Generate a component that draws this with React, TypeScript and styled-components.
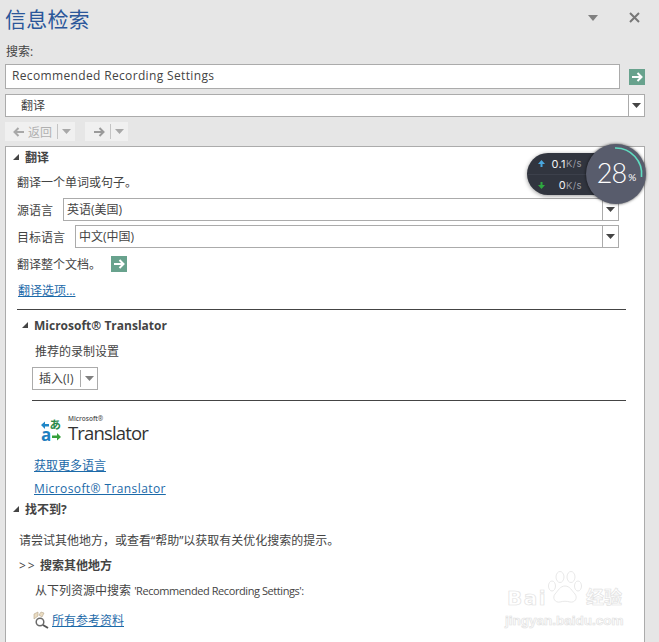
import styled, { createGlobalStyle } from 'styled-components';

const GlobalStyle = createGlobalStyle`
  html, body {
    margin: 0;
    height: 100%;
    background: #e6e6e6;
    overflow: hidden;
  }
  body {
    font-family: "Open Sans", "Noto Sans CJK SC", sans-serif;
    font-size: 12px;
    color: #444;
  }
`;

const Pane = styled.div`
  width: 659px;
  height: 642px;
  padding: 0 14px 0 5px;
  box-sizing: border-box;
  display: flex;
  flex-direction: column;
  position: relative;
  overflow: hidden;
`;

const TitleBar = styled.div`
  height: 44px;
  display: flex;
  align-items: flex-start;
  justify-content: space-between;
`;

const Title = styled.h1`
  margin: 5px 0 0;
  font-size: 21px;
  line-height: 28px;
  font-weight: 400;
  color: #2b579a;
  letter-spacing: 0.2px;
`;

const WindowButtons = styled.div`
  display: flex;
  gap: 31px;
  padding: 12px 5px 0 0;
  align-items: flex-start;
`;

const SearchLabel = styled.div`
  height: 20px;
  line-height: 16px;
  padding-left: 1px;
`;

const SearchRow = styled.div`
  display: flex;
  align-items: center;
  justify-content: space-between;
  height: 25px;
`;

const SearchInput = styled.div`
  width: 615px;
  height: 25px;
  box-sizing: border-box;
  border: 1px solid #ababab;
  background: #fff;
  padding-left: 6px;
  line-height: 21px;
  font-size: 12px;
  letter-spacing: 0.35px;
  color: #444;
`;

const GoButton = styled.span`
  width: 16px;
  height: 16px;
  background: #68a28d;
  display: inline-flex;
  align-items: center;
  justify-content: center;
  flex: none;
`;

const Combo = styled.div<{ $width?: string }>`
  display: flex;
  flex: ${(p) => (p.$width ? 'none' : '1')};
  width: ${(p) => p.$width ?? 'auto'};
  height: 23px;
  box-sizing: border-box;
  border: 1px solid #ababab;
  background: #fff;
`;

const ComboText = styled.div<{ $indent?: number }>`
  flex: 1;
  padding-left: ${(p) => p.$indent ?? 3}px;
  line-height: 21px;
`;

const ComboArrow = styled.div`
  width: 15px;
  border-left: 1px solid #ababab;
  display: flex;
  align-items: center;
  justify-content: center;
`;

const SourceRow = styled.div`
  margin-top: 5px;
  display: flex;
`;

const Nav = styled.div`
  margin-top: 5px;
  height: 20px;
  display: flex;
  gap: 10px;
`;

const NavGroup = styled.div`
  display: flex;
  align-items: center;
  background: #f0f0f0;
  height: 19px;
  color: #b0b0b0;
`;

const NavPart = styled.div<{ $first?: boolean }>`
  display: flex;
  align-items: center;
  gap: 3px;
  height: 15px;
  padding: ${(p) => (p.$first ? '0 5px 0 8px' : '0 4px')};
  border-left: ${(p) => (p.$first ? 'none' : '1px solid #c4c4c4')};
`;

const Results = styled.div`
  margin-top: 4px;
  flex: 1;
  background: #fff;
  border: 1px solid #ababab;
  border-bottom: none;
  padding: 0 18px 0 0;
  position: relative;
`;

const Collapse = styled.div<{ $indent: number; $top: number }>`
  display: flex;
  align-items: center;
  gap: 6px;
  padding-left: ${(p) => p.$indent}px;
  margin-top: ${(p) => p.$top}px;
  height: 20px;
  font-weight: 700;
  color: #444;
`;

const Corner = styled.span`
  width: 0;
  height: 0;
  border-style: solid;
  border-width: 0 0 6px 6px;
  border-color: transparent transparent #444 transparent;
  flex: none;
`;

const Line = styled.div<{ $indent: number; $top: number; $height?: number }>`
  padding-left: ${(p) => p.$indent}px;
  margin-top: ${(p) => p.$top}px;
  height: ${(p) => p.$height ?? 18}px;
  line-height: ${(p) => p.$height ?? 18}px;
`;

const LangRow = styled.div<{ $top: number }>`
  display: flex;
  align-items: center;
  justify-content: space-between;
  padding: 0 7px 0 11px;
  margin-top: ${(p) => p.$top}px;
`;

const Link = styled.a<{ $spaced?: boolean }>`
  color: #1c6aa9;
  text-decoration: underline;
  letter-spacing: ${(p) => (p.$spaced ? '0.4px' : '0')};
`;

const DocRow = styled.div`
  display: flex;
  align-items: center;
  gap: 10px;
  padding-left: 11px;
  margin-top: 6px;
  height: 20px;
`;

const Rule = styled.hr<{ $top: number; $left: number }>`
  border: none;
  height: 1px;
  background: #444;
  margin: ${(p) => p.$top}px 0 0 ${(p) => p.$left}px;
`;

const Bold = styled.span`
  font-weight: 700;
`;

const Chevrons = styled.span`
  display: inline-block;
  width: 21px;
  letter-spacing: 2px;
`;

const SmallLatin = styled.span`
  font-size: 11px;
  letter-spacing: -0.42px;
`;

const InsertButton = styled.div`
  margin: 6px 0 0 26px;
  width: 66px;
  height: 23px;
  box-sizing: border-box;
  border: 1px solid #ababab;
  display: flex;
  align-items: center;
`;

const InsertText = styled.div`
  width: 48px;
  height: 17px;
  line-height: 17px;
  padding-left: 6px;
  box-sizing: border-box;
  border-right: 1px solid #ababab;
`;

const InsertArrow = styled.div`
  flex: 1;
  display: flex;
  justify-content: center;
`;

const Logo = styled.div`
  margin: 14px 0 0 35px;
  display: flex;
  align-items: flex-end;
  gap: 7px;
  height: 27px;
`;

const LogoMark = styled.svg`
  overflow: visible;
`;

const LogoWords = styled.div`
  display: flex;
  flex-direction: column;
  color: #333;
`;

const LogoMaker = styled.span`
  font-size: 6.5px;
  line-height: 8px;
  font-family: "Open Sans", sans-serif;
  font-weight: 600;
  color: #555;
`;

const LogoName = styled.span`
  font-size: 18.500px;
  line-height: 19px;
  letter-spacing: -0.85px;
  font-family: "Open Sans", sans-serif;
`;

const RefRow = styled.div`
  display: flex;
  align-items: center;
  gap: 2px;
  padding-left: 27px;
  margin-top: 10px;
  height: 20px;
`;

const Meter = styled.div`
  position: absolute;
  left: 527px;
  top: 144px;
  width: 120px;
  height: 60px;
`;

const MeterPill = styled.div`
  position: absolute;
  left: 0;
  top: 9px;
  width: 90px;
  height: 42px;
  border-radius: 21px;
  background: #31353f;
  box-shadow: 0 1px 4px rgba(0, 0, 0, 0.4);
  font-family: "Inter", sans-serif;
`;

const MeterRow = styled.div`
  height: 21px;
  box-sizing: border-box;
  display: flex;
  align-items: center;
  justify-content: flex-end;
  padding-right: 35px;
  position: relative;
  font-size: 11px;
  letter-spacing: 0.4px;
  color: #f2f2f2;
  & + & {
    border-top: 1px solid #3c404b;
  }
`;

const MeterUnit = styled.span`
  font-size: 9.500px;
  color: #9a9da6;
`;

const MeterIcon = styled.svg`
  position: absolute;
  left: 10px;
  top: 6px;
`;

const MeterDial = styled.div`
  position: absolute;
  left: 59px;
  top: 0;
  width: 60px;
  height: 60px;
  padding-bottom: 3px;
  box-sizing: border-box;
  border-radius: 50%;
  background: #585c6c;
  box-shadow: 0 0 3px rgba(0, 0, 0, 0.7);
  display: flex;
  align-items: center;
  justify-content: center;
  color: #fff;
  font-family: "Lato", sans-serif;
  font-size: 27px;
  font-weight: 300;
  letter-spacing: -1px;
`;

const DialPercent = styled.span`
  font-size: 10px;
  font-weight: 400;
  margin: 9px 0 0 2px;
`;

const DialRing = styled.svg`
  position: absolute;
  left: 0;
  top: 0;
`;

const Watermark = styled.div`
  position: absolute;
  left: 505px;
  top: 571px;
  width: 122px;
  color: #fff;
  -webkit-text-stroke: 0.7px #e2e2e2;
  font-family: "Liberation Sans", "Noto Sans CJK SC", sans-serif;
`;

const MarkTop = styled.div`
  display: flex;
  align-items: flex-end;
  height: 36px;
  font-weight: 700;
  line-height: 18px;
`;

const MarkBai = styled.span`
  width: 42px;
  padding-left: 2px;
  box-sizing: border-box;
  font-family: "DejaVu Sans", sans-serif;
  font-size: 20px;
  letter-spacing: 1.5px;
`;

const MarkCn = styled.span`
  font-size: 18px;
  margin-left: 3px;
`;

const MarkUrl = styled.div`
  font-size: 13.500px;
  font-weight: 700;
  line-height: 14px;
  margin-top: 7px;
`;

const LogoGlyph = styled.text<{ $fill: string; $size: number }>`
  fill: ${(p) => p.$fill};
  font-size: ${(p) => p.$size}px;
  font-weight: 700;
  font-family: "Open Sans", "Noto Sans CJK JP", sans-serif;
`;

const Tri = ({ color = '#444' }: { color?: string }) => (
  <svg width="9" height="5" viewBox="0 0 9 5">
    <path d="M0 0h9L4.500 5z" fill={color} />
  </svg>
);

const Arrow = ({ color = '#fff', size = 12 }: { color?: string; size?: number }) => (
  <svg width={size} height={size} viewBox="0 0 12 12" fill="none" stroke={color} strokeWidth="2">
    <path d="M1 6h9M6.500 2l4 4-4 4" />
  </svg>
);

const BackArrow = () => (
  <svg width="12" height="12" viewBox="0 0 12 12" fill="none" stroke="#a8a8a8" strokeWidth="2">
    <path d="M11 6H2M5.500 2l-4 4 4 4" />
  </svg>
);

export default function App() {
  return (
    <Pane>
      <GlobalStyle />
      <TitleBar>
        <Title>信息检索</Title>
        <WindowButtons>
          <svg width="10" height="6" viewBox="0 0 10 6" style={{ marginTop: 3 }}>
            <path d="M0 0h10L5 6z" fill="#808080" />
          </svg>
          <svg width="11" height="11" viewBox="0 0 11 11" stroke="#777" strokeWidth="2">
            <path d="M1 1l9 9M10 1l-9 9" />
          </svg>
        </WindowButtons>
      </TitleBar>
      <SearchLabel>搜索:</SearchLabel>
      <SearchRow>
        <SearchInput>Recommended Recording Settings</SearchInput>
        <GoButton>
          <Arrow />
        </GoButton>
      </SearchRow>
      <SourceRow>
        <Combo>
          <ComboText $indent={15}>翻译</ComboText>
          <ComboArrow>
            <Tri />
          </ComboArrow>
        </Combo>
      </SourceRow>
      <Nav>
        <NavGroup>
          <NavPart $first>
            <BackArrow />
            返回
          </NavPart>
          <NavPart>
            <Tri color="#a8a8a8" />
          </NavPart>
        </NavGroup>
        <NavGroup>
          <NavPart $first>
            <Arrow color="#9a9a9a" />
          </NavPart>
          <NavPart>
            <Tri color="#a8a8a8" />
          </NavPart>
        </NavGroup>
      </Nav>
      <Results>
        <Collapse $indent={7} $top={0}>
          <Corner />
          <Bold>翻译</Bold>
        </Collapse>
        <Line $indent={11} $top={7}>翻译一个单词或句子。</Line>
        <LangRow $top={6}>
          <span>源语言</span>
          <Combo $width="556px">
            <ComboText>英语(美国)</ComboText>
            <ComboArrow>
              <Tri />
            </ComboArrow>
          </Combo>
        </LangRow>
        <LangRow $top={4}>
          <span>目标语言</span>
          <Combo $width="544px">
            <ComboText>中文(中国)</ComboText>
            <ComboArrow>
              <Tri />
            </ComboArrow>
          </Combo>
        </LangRow>
        <DocRow>
          翻译整个文档。
          <GoButton>
            <Arrow />
          </GoButton>
        </DocRow>
        <Line $indent={12} $top={8}>
          <Link>翻译选项...</Link>
        </Line>
        <Rule $top={9} $left={11} />
        <Collapse $indent={16} $top={5}>
          <Corner />
          <Bold>Microsoft® Translator</Bold>
        </Collapse>
        <Line $indent={29} $top={8}>推荐的录制设置</Line>
        <InsertButton>
          <InsertText>插入(I)</InsertText>
          <InsertArrow>
            <Tri color="#808080" />
          </InsertArrow>
        </InsertButton>
        <Rule $top={10} $left={26} />
        <Logo>
          <LogoMark width="20" height="24" viewBox="0 0 20 24">
            <path d="M0 7l4-3.500V6h4v2.500H4V11z" fill="#1f86c8" />
            <LogoGlyph x="0" y="23" $fill="#1f7fc0" $size={17}>a</LogoGlyph>
            <LogoGlyph x="8.500" y="11" $fill="#2a8a4a" $size={11.500}>あ</LogoGlyph>
            <path d="M20 19l-4 3.500V20h-5v-2.500h5V15z" fill="#35a03a" />
          </LogoMark>
          <LogoWords>
            <LogoMaker>Microsoft®</LogoMaker>
            <LogoName>Translator</LogoName>
          </LogoWords>
        </Logo>
        <Line $indent={28} $top={15}>
          <Link>获取更多语言</Link>
        </Line>
        <Line $indent={28} $top={5}>
          <Link $spaced>Microsoft® Translator</Link>
        </Line>
        <Collapse $indent={7} $top={1}>
          <Corner />
          <Bold>找不到?</Bold>
        </Collapse>
        <Line $indent={13} $top={13}>请尝试其他地方，或查看“帮助”以获取有关优化搜索的提示。</Line>
        <Line $indent={13} $top={7}>
          <Chevrons>&gt;&gt;</Chevrons>
          <Bold>搜索其他地方</Bold>
        </Line>
        <Line $indent={29} $top={7}>
          从下列资源中搜索 <SmallLatin>'Recommended Recording Settings':</SmallLatin>
        </Line>
        <RefRow>
          <svg width="17" height="18" viewBox="0 0 17 18" fill="none">
            <path d="M1 8V3l4-2v4zM6 4l2-3 3 1-2 4z" fill="#eadcc2" stroke="#b5a68c" strokeWidth="0.600" />
            <circle cx="7" cy="11" r="3.800" fill="#fff" stroke="#6a6a6a" strokeWidth="1.500" />
            <path d="M10 14l5 3" stroke="#555" strokeWidth="2" />
          </svg>
          <Link>所有参考资料</Link>
        </RefRow>
      </Results>
      <Meter>
        <MeterPill>
          <MeterRow>
            <MeterIcon width="9" height="9" viewBox="0 0 9 9">
              <path d="M4.500 1L8 5H5.500v3h-2V5H1z" fill="#4aa8e0" />
            </MeterIcon>
            0.1<MeterUnit>K/s</MeterUnit>
          </MeterRow>
          <MeterRow>
            <MeterIcon width="9" height="9" viewBox="0 0 9 9">
              <path d="M4.500 8L8 4H5.500V1h-2v3H1z" fill="#2ea83f" />
            </MeterIcon>
            0<MeterUnit>K/s</MeterUnit>
          </MeterRow>
        </MeterPill>
        <MeterDial>
          <DialRing width="60" height="60" viewBox="0 0 60 60" fill="none">
            <path d="M29 4a26 26 0 0 1 26.500 29" stroke="#5fdcc0" strokeWidth="1.600" />
          </DialRing>
          28<DialPercent>%</DialPercent>
        </MeterDial>
      </Meter>
      <Watermark>
        <MarkTop>
          <MarkBai>Bai</MarkBai>
          <svg width="36" height="36" viewBox="0 0 36 36" fill="none" stroke="#e2e2e2" strokeWidth="0.800">
            <ellipse cx="5" cy="15" rx="3.500" ry="5" />
            <ellipse cx="13" cy="6" rx="4" ry="5.500" />
            <ellipse cx="24" cy="6" rx="4" ry="5.500" />
            <ellipse cx="31" cy="15" rx="3.500" ry="5" />
            <path d="M18 15c5 0 7 5 10 8 3 4 0 9-5 8-3-1-7-1-10 0-5 1-8-4-5-8 3-3 5-8 10-8z" />
          </svg>
          <MarkCn>经验</MarkCn>
        </MarkTop>
        <MarkUrl>jingyan.baidu.com</MarkUrl>
      </Watermark>
    </Pane>
  );
}
